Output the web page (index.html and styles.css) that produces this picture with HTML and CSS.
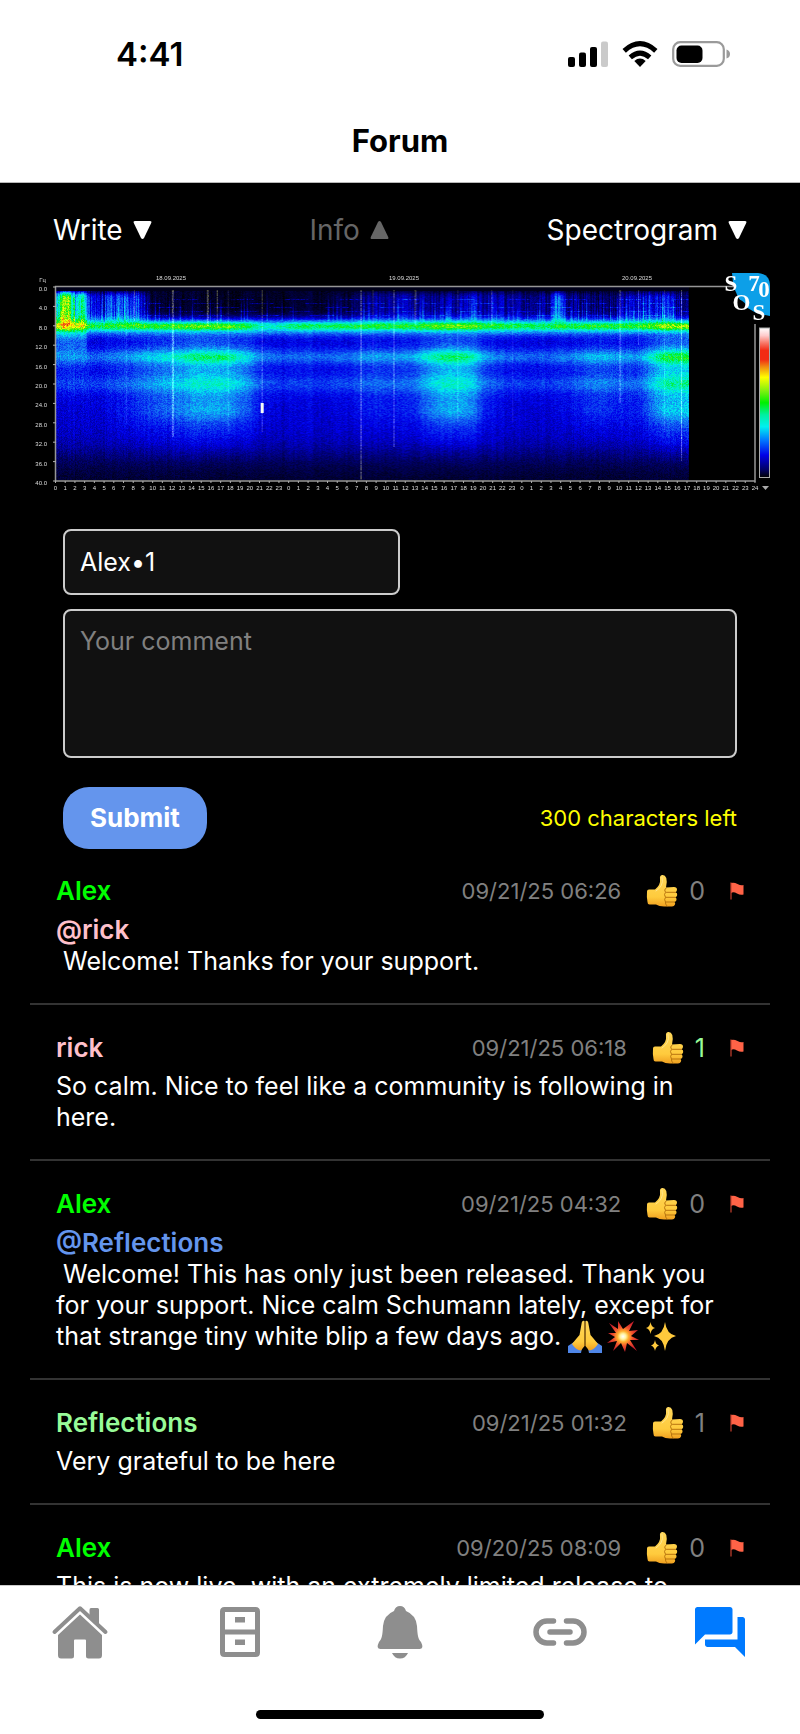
FILE: index.html
```html
<!DOCTYPE html>
<html lang="en">
<head>
<meta charset="utf-8">
<meta name="viewport" content="width=device-width, initial-scale=1">
<title>Forum</title>
<link rel="stylesheet" href="styles.css">
</head>
<body>
<svg class="symbols" aria-hidden="true">
  <defs>
    <linearGradient id="skin" x1="0" y1="0" x2="0" y2="1">
      <stop offset="0" stop-color="#ffd75a"/><stop offset="0.7" stop-color="#ffcb3d"/><stop offset="1" stop-color="#f0a020"/>
    </linearGradient>
    <radialGradient id="blast">
      <stop offset="0" stop-color="#ffffff"/><stop offset="0.18" stop-color="#fff3a0"/><stop offset="0.35" stop-color="#ffb02e"/><stop offset="0.6" stop-color="#f2542d"/><stop offset="1" stop-color="#c81e2c"/>
    </radialGradient>
  </defs>
  <symbol id="thumb" viewBox="0 0 32 34">
    <path fill="url(#skin)" d="M1 17.500Q1 15.500 3 15.500H9Q11.500 13.500 13 11Q14.500 8.500 14 5Q13.500 1.500 16 1Q19 0.500 20.300 4Q21.500 8 20 13.500L28 13Q31 13 31 15.500Q31 17.500 29.500 18.200Q31.500 19 31.200 21Q31 22.800 29.300 23.300Q31 24.200 30.500 26Q30.200 27.700 28.500 28Q29.600 29 29 30.500Q28.300 32.500 26 32.500H18Q13 32.500 10 30.500H3.500Q1.500 30.500 1.500 28Q0.500 23 1 17.500Z"/>
    <path fill="none" stroke="#b8740f" stroke-width="1" stroke-linecap="round" d="M20.500 18.300H29.500M20 23.300H29.300M20 28H28.500M20 14Q17.500 16 19.500 18.300Q17.500 20.500 19.500 23.300Q17.800 25.500 19.500 28Q19 30 21 32"/>
    <path fill="none" stroke="#ffe58a" stroke-width="1" stroke-linecap="round" d="M16 3Q17.500 8 15 12Q13 15 10 17"/>
  </symbol>
  <symbol id="flag" viewBox="0 0 14 18">
    <path fill="#ff6347" d="M1 1Q4 0 7.500 2T13.500 3V12.500Q10.500 13.500 7 11.500T1 11Z"/>
    <path fill="none" stroke="#c9422f" stroke-width="1.200" d="M1 0.500V17.500"/>
  </symbol>
</svg>

<header class="top">
  <div class="status">
    <span class="clock">4:41</span>
    <svg class="status-icons" viewBox="0 0 164 28" role="img" aria-label="Signal, Wi-Fi and battery">
      <rect x="0" y="17" width="7" height="10" rx="2"/>
      <rect x="11" y="12.500" width="7" height="14.500" rx="2"/>
      <rect x="22" y="7" width="7" height="20" rx="2"/>
      <rect x="33" y="1.500" width="7" height="25.500" rx="2" fill="#cacaca"/>
      <path d="M72 27L66.300 20.900Q72 16.200 77.700 20.900Z"/>
      <path fill="none" stroke="#000" stroke-width="5" d="M62.300 17.300Q72 8.800 81.700 17.300M56.200 10.800Q72 -3.500 87.800 10.800"/>
      <rect x="105.200" y="2.200" width="50.600" height="23.600" rx="7" fill="#fff" stroke="#9a9a9a" stroke-width="2.200"/>
      <rect x="108.500" y="5.500" width="26" height="17.500" rx="5"/>
      <path fill="#9a9a9a" d="M158.500 9.500Q162 10.500 162 14T158.500 18.500Z"/>
    </svg>
  </div>
  <h1 class="title">Forum</h1>
</header>

<main class="page">
  <div class="panels">
    <button class="panel-btn" type="button">Write <svg class="tri" viewBox="0 0 19 20"><path d="M2 1H17Q19 1 18.200 3L11 18Q9.500 20 8 18L0.800 3Q0 1 2 1Z"/></svg></button>
    <button class="panel-btn panel-off" type="button">Info <svg class="tri" viewBox="0 0 19 20"><path d="M2 19H17Q19 19 18.200 17L11 2Q9.500 0 8 2L0.800 17Q0 19 2 19Z"/></svg></button>
    <button class="panel-btn" type="button">Spectrogram <svg class="tri" viewBox="0 0 19 20"><path d="M2 1H17Q19 1 18.200 3L11 18Q9.500 20 8 18L0.800 3Q0 1 2 1Z"/></svg></button>
  </div>

  <figure class="spectro">
    <canvas class="heat" id="heat" width="634" height="193"></canvas>
    <svg class="axes" id="axes" viewBox="0 0 740 225" role="img" aria-label="Spectrogram, 18.09.2025 to 20.09.2025">
      <defs>
        <linearGradient id="scale" x1="0" y1="0" x2="0" y2="1">
          <stop offset="0" stop-color="#fff"/><stop offset="0.050" stop-color="#fcc"/><stop offset="0.100" stop-color="#f87868"/><stop offset="0.150" stop-color="#f22a14"/><stop offset="0.210" stop-color="#f22a14"/><stop offset="0.260" stop-color="#f08c10"/><stop offset="0.330" stop-color="#ff0"/><stop offset="0.420" stop-color="#80f010"/><stop offset="0.500" stop-color="#00f000"/><stop offset="0.580" stop-color="#00f0a0"/><stop offset="0.660" stop-color="#00f0f0"/><stop offset="0.750" stop-color="#0078ff"/><stop offset="0.850" stop-color="#0000e8"/><stop offset="0.950" stop-color="#000060"/><stop offset="1" stop-color="#000"/>
        </linearGradient>
      </defs>
      <path fill="none" stroke="#969696" stroke-width="1.500" d="M25.500 212V16.500H704M25 211H725V54"/>
      <g id="marks"></g>
      <rect x="729.500" y="58" width="10" height="149.500" fill="url(#scale)" stroke="#aaa" stroke-width="1"/>
      <path fill="#0c9fe8" d="M702 3H728Q740 4 740 16V46Q722 44 712 33Q703 22 702 3Z"/>
      <path fill="#000" d="M708 29Q710 36 717 39Q717 32 708 29Z"/>
      <g class="logo-text">
        <text x="701" y="21">S</text><text x="724" y="21">7</text><text x="734" y="27">0</text><text x="711.500" y="40">O</text><text x="729" y="50">S</text>
      </g>
      <path fill="#aaa" d="M732 216H739L735.500 220Z"/>
    </svg>
  </figure>

  <form class="compose" onsubmit="return false">
    <input class="field name" type="text" value="Alex•1" aria-label="Name">
    <textarea class="field comment" placeholder="Your comment" aria-label="Your comment"></textarea>
    <div class="send">
      <button class="submit" type="submit">Submit</button>
      <span class="left">300 characters left</span>
    </div>
  </form>

  <div class="posts">
    <article class="post">
      <div class="post-head"><b class="user lime">Alex</b><time class="date">09/21/25 06:26</time><button class="like" type="button" aria-label="Like"><svg class="thumb"><use href="#thumb"/></svg><span>0</span></button><button class="report" type="button" aria-label="Report"><svg class="flag"><use href="#flag"/></svg></button></div>
      <b class="mention pink">@rick</b>
      <p class="text"> Welcome! Thanks for your support.</p>
    </article>
    <article class="post">
      <div class="post-head"><b class="user pink">rick</b><time class="date">09/21/25 06:18</time><button class="like liked" type="button" aria-label="Like"><svg class="thumb"><use href="#thumb"/></svg><span>1</span></button><button class="report" type="button" aria-label="Report"><svg class="flag"><use href="#flag"/></svg></button></div>
      <p class="text">So calm. Nice to feel like a community is following in here.</p>
    </article>
    <article class="post">
      <div class="post-head"><b class="user lime">Alex</b><time class="date">09/21/25 04:32</time><button class="like" type="button" aria-label="Like"><svg class="thumb"><use href="#thumb"/></svg><span>0</span></button><button class="report" type="button" aria-label="Report"><svg class="flag"><use href="#flag"/></svg></button></div>
      <b class="mention blue">@Reflections</b>
      <p class="text"> Welcome! This has only just been released. Thank you for your support. Nice calm Schumann lately, except for that strange tiny white blip a few days ago. <svg class="emoji" viewBox="0 0 34 34" role="img" aria-label="Folded hands"><path fill="#4f86e8" d="M0 27L6 23L14 29L13 34H0ZM34 27L28 23L20 29L21 34H34Z"/><path fill="url(#skin)" d="M16.500 2Q14 1 13.500 5L11.500 16Q8 20 4 25Q8 31 13 31.500L16.500 27ZM17.500 2Q20 1 20.500 5L22.500 16Q26 20 30 25Q26 31 21 31.500L17.500 27Z"/><path fill="none" stroke="#b8740f" stroke-width="0.800" d="M17 3V27"/></svg><svg class="emoji" viewBox="0 0 34 34" role="img" aria-label="Collision"><path fill="url(#blast)" d="M3 4L12 10L12 2L17 10L28 2L23 12L32 11L25 17L33 21L24 21L31 32L21 24L19 33L15 24L7 32L11 22L1 24L9 18L2 14L10 14Z"/></svg><svg class="emoji" viewBox="0 0 34 34" role="img" aria-label="Sparkles"><path fill="#ffc93c" d="M21 3Q22.500 15 32 17Q22.500 19 21 32Q19.500 19 10 17Q19.500 15 21 3ZM6.500 3Q7.200 8 11 9Q7.200 10 6.500 15Q5.800 10 2 9Q5.800 8 6.500 3ZM11 21Q11.700 25.500 15 26.500Q11.700 27.500 11 32Q10.300 27.500 7 26.500Q10.300 25.500 11 21Z"/></svg></p>
    </article>
    <article class="post">
      <div class="post-head"><b class="user green">Reflections</b><time class="date">09/21/25 01:32</time><button class="like" type="button" aria-label="Like"><svg class="thumb"><use href="#thumb"/></svg><span>1</span></button><button class="report" type="button" aria-label="Report"><svg class="flag"><use href="#flag"/></svg></button></div>
      <p class="text">Very grateful to be here</p>
    </article>
    <article class="post">
      <div class="post-head"><b class="user lime">Alex</b><time class="date">09/20/25 08:09</time><button class="like" type="button" aria-label="Like"><svg class="thumb"><use href="#thumb"/></svg><span>0</span></button><button class="report" type="button" aria-label="Report"><svg class="flag"><use href="#flag"/></svg></button></div>
      <p class="text">This is now live, with an extremely limited release to</p>
    </article>
  </div>
</main>

<nav class="tabs">
  <div class="tab-row">
    <a class="tab" href="#home" aria-label="Home"><svg viewBox="0 0 60 60"><path fill="none" stroke="currentColor" stroke-width="4" stroke-linecap="round" stroke-linejoin="round" d="M4.500 30L30 6.300L55.500 30"/><path d="M39.500 8Q39.500 6 41 6H47.500Q49 6 49 7.500V22.500L39.500 14ZM30 12.500L52 33V53Q52 56.500 49 56.500H38.500Q36 56.500 36 54V38.500Q36 37.500 35 37.500H25Q24 37.500 24 38.500V54Q24 56.500 21.500 56.500H11Q8 56.500 8 53V33Z"/></svg></a>
    <a class="tab" href="#archive" aria-label="Archive"><svg viewBox="0 0 60 60"><path fill="none" stroke="currentColor" stroke-width="5" stroke-linejoin="round" d="M14.500 7.500H45.500Q47.500 7.500 47.500 9.500V50.500Q47.500 52.500 45.500 52.500H14.500Q12.500 52.500 12.500 50.500V9.500Q12.500 7.500 14.500 7.500ZM12.500 30H47.500"/><path d="M25 15H35V20.500H25ZM25 37.500H35V43H25Z"/></svg></a>
    <a class="tab" href="#alerts" aria-label="Alerts"><svg viewBox="0 0 60 60"><path d="M30 4Q34.500 4 36 9Q46 13 47 24C47.500 33 48 37 51 40Q54.500 47 49.500 47H10.500Q5.500 47 9 40C12 37 12.500 33 13 24Q14 13 24 9Q25.500 4 30 4ZM22 51H38Q35.500 56.500 30 56.500T22 51Z"/></svg></a>
    <a class="tab" href="#links" aria-label="Links"><svg viewBox="0 0 60 60"><path fill="none" stroke="currentColor" stroke-width="5.500" stroke-linecap="round" d="M23.500 19H17A11 11 0 0 0 17 41H23.500M36.500 19H43A11 11 0 0 1 43 41H36.500M20 30H40"/></svg></a>
    <a class="tab tab-on" href="#forum" aria-label="Forum" aria-current="page"><svg viewBox="0 0 24 24"><path d="M21 6h-2v9H6v2c0 .55.45 1 1 1h11l4 4V7c0-.55-.45-1-1-1zm-4 6V3c0-.55-.45-1-1-1H3c-.55 0-1 .45-1 1v14l4-4h10c.55 0 1-.45 1-1z"/></svg></a>
  </div>
  <div class="home-bar"></div>
</nav>
<script src="spectrogram.js"></script>
</body>
</html>
```

FILE: styles.css
```css
* { box-sizing: border-box; }

body {
  margin: 0;
  height: 100vh;
  display: flex;
  flex-direction: column;
  background: #000;
  color: #fff;
  font-family: Inter, "Liberation Sans", sans-serif;
  font-size: 25px;
  line-height: 32px;
}

button {
  padding: 0;
  border: 0;
  background: none;
  color: inherit;
  font: inherit;
}

.symbols { position: absolute; width: 0; height: 0; }

.top {
  flex: none;
  background: #fff;
  color: #000;
  border-bottom: 1px solid #b8b8b8;
}
.status {
  display: flex;
  justify-content: space-between;
  align-items: center;
  padding: 34px 68px 0 116px;
}
.clock { font-size: 33px; font-weight: 600; line-height: 40px; }
.status-icons { width: 164px; height: 28px; }
.title {
  margin: 0;
  padding: 47px 0 21px;
  text-align: center;
  font-size: 31px;
  font-weight: 700;
  line-height: 40px;
}

.page { flex: 1; min-height: 0; overflow: hidden; }

.panels {
  display: flex;
  justify-content: space-between;
  padding: 31px 53px 0;
  font-size: 28px;
}
.panel-btn { display: flex; align-items: center; gap: 10px; }
.panel-off { color: #666; }
.tri { width: 19px; height: 20px; fill: currentColor; }

.spectro { position: relative; margin: 24px 30px 0; }
.axes { display: block; position: relative; width: 100%; }
.axes text { font-family: "Liberation Sans", sans-serif; font-size: 6px; fill: #ddd; }
.axes .logo-text text {
  font-family: "Liberation Serif", serif;
  font-size: 23px;
  font-weight: 700;
  fill: #fff;
  text-anchor: middle;
}
.heat { position: absolute; left: 3.5%; top: 7.7%; width: 85.6%; height: 85.8%; }

.compose { padding: 34px 63px 0; }
.field {
  display: block;
  border: 2px solid #ccc;
  border-radius: 8px;
  background: #111;
  color: #fff;
  font: inherit;
  padding: 14px 15px;
  outline: 0;
}
.field::placeholder { color: #808080; opacity: 1; }
.name { width: 50%; height: 66px; }
.comment { width: 100%; height: 149px; margin-top: 14px; resize: none; }
.send {
  display: flex;
  justify-content: space-between;
  align-items: center;
  margin-top: 29px;
}
.submit {
  padding: 15px 27px;
  border-radius: 26px;
  background: #6495ed;
  font-size: 26px;
  font-weight: 700;
}
.left { color: #ff0; font-size: 22px; }

.posts { padding: 0 30px; }
.post { padding: 25px 26px 26px; border-bottom: 2px solid #333; }
.post:first-child { padding-top: 24px; }
.post-head { display: flex; align-items: center; height: 36px; margin-bottom: 5px; }
.user { flex: 1; }
.user, .mention { font-size: 26px; font-weight: 600; }
.mention { display: block; }
.lime { color: #0f0; }
.pink { color: #ffc0cb; }
.blue { color: #6495ed; }
.green { color: #98fb98; }
.date { color: #808080; font-size: 22px; }
.like { display: flex; align-items: center; gap: 11px; margin-left: 25px; color: #808080; }
.liked { color: #98fb98; }
.thumb { width: 32px; height: 34px; }
.report { display: flex; margin-left: 25px; }
.flag { width: 14px; height: 18px; }
.text { margin: 0; padding-right: 16px; line-height: 31px; white-space: pre-wrap; }
.emoji { width: 34px; height: 34px; margin: -8px 4px -4px 0; vertical-align: middle; }

.tabs {
  flex: none;
  background: #fff;
  color: #8e8e8e;
  border-top: 1px solid #ccc;
  padding: 16px 0 15px;
}
.tab-row { display: flex; }
.tab { flex: 1; display: flex; justify-content: center; color: inherit; }
.tab svg { width: 60px; height: 60px; fill: currentColor; }
.tab-on { color: #007aff; }
.home-bar {
  width: 36%;
  height: 9px;
  margin: 48px auto 0;
  border-radius: 5px;
  background: #000;
}
```

FILE: spectrogram.js
```js
// Axis labels: frequency down the side, hours along the bottom, dates on top.
const NS = "http://www.w3.org/2000/svg";
const marks = document.getElementById("marks");

function label(x, y, text, anchor) {
  const t = document.createElementNS(NS, "text");
  t.setAttribute("x", x);
  t.setAttribute("y", y);
  t.setAttribute("text-anchor", anchor);
  t.textContent = text;
  marks.appendChild(t);
}

function tick(d) {
  const p = document.createElementNS(NS, "path");
  p.setAttribute("d", d);
  p.setAttribute("stroke", "#b0b0b0");
  marks.appendChild(p);
}

label(16, 12, "Гц", "end");
for (let i = 0; i <= 10; i++) {
  const y = 17 + i * 19.4;
  label(17, y + 4, (i * 4).toFixed(1), "end");
  tick(`M23 ${y}h3`);
}
for (let h = 0; h <= 72; h++) {
  const x = 25.500 + h * 9.715;
  label(x, 220, h === 72 ? 24 : h % 24, "middle");
  tick(`M${x} 211v2`);
}
["18.09.2025", "19.09.2025", "20.09.2025"].forEach((d, i) => label(141 + i * 233, 10, d, "middle"));

// Signal strength over 65 hours and 40 Hz, drawn through the colour scale.
const scale = [
  [0, 0, 0, 0], [0.05, 0, 0, 80], [0.15, 0, 0, 235], [0.25, 20, 120, 245], [0.35, 0, 235, 240],
  [0.43, 0, 240, 150], [0.5, 0, 240, 20], [0.58, 128, 240, 16], [0.67, 255, 255, 0],
  [0.74, 240, 140, 16], [0.82, 242, 42, 20], [0.92, 250, 170, 160], [1, 255, 255, 255]
];

function colour(v) {
  v = Math.max(0, Math.min(1, v));
  let i = 1;
  while (i < scale.length - 1 && scale[i][0] < v) i++;
  const a = scale[i - 1], b = scale[i], k = (v - a[0]) / (b[0] - a[0]);
  return [1, 2, 3].map(c => a[c] + (b[c] - a[c]) * k);
}

let seed = 7;
function rnd() {
  seed = (seed * 1664525 + 1013904223) >>> 0;
  return seed / 4294967296;
}
const bell = (x, c, w) => Math.exp(-(((x - c) / w) ** 2));
const step = (x, c, w) => 1 / (1 + Math.exp(-(x - c) / w));

const canvas = document.getElementById("heat");
const ctx = canvas.getContext("2d");
const W = canvas.width, H = canvas.height;
const img = ctx.createImageData(W, H);

// Thin vertical interference lines: hour, strength, depth in Hz.
const spikes = [[12, 0.16, 31], [7.2, 0.05, 28], [8, 0.15, 7], [15.6, 0.18, 8], [16.6, 0.18, 8], [17.7, 0.06, 30],
  [21.2, 0.14, 30], [31.4, 0.22, 40], [34.8, 0.18, 33], [37, 0.12, 8], [44.9, 0.14, 8], [41.4, 0.07, 28],
  [47, 0.05, 28], [58.1, 0.1, 24], [60, 0.1, 12], [64.4, 0.2, 36], [32.6, 0.08, 18], [62.7, 0.06, 30]];

let drift = 0;
for (let x = 0; x < W; x++) {
  const t = x / 9.715;
  const column = rnd() - 0.5;
  const burst = rnd();
  drift = drift * 0.9 + (rnd() - 0.5) * 0.5;
  const day = 0.4 * bell(t, 11, 4) + 0.95 * step(t, 13.5, 1.2) * (1 - step(t, 19.6, 0.9))
    + 1.05 * step(t, 38, 1) * (1 - step(t, 43.4, 0.8)) + 1.1 * step(t, 61.2, 0.7)
    + 0.35 * bell(t, 56, 3) + 0.2 * bell(t, 33, 3);
  const low = 0.22 * step(9 - t, 0, 0.3) + 0.1 * bell(t, 34, 4) + 0.12 * bell(t, 42, 5)
    + 0.2 * bell(t, 51.6, 0.6) + 0.1 * bell(t, 53, 7) + 0.17 * bell(t, 62, 3);
  for (let y = 0; y < H; y++) {
    const f = y / H * 40;
    let v = 0.025 + 0.13 * step(f, 7, 0.5) * (1 - step(f, 34.5, 2));
    v -= 0.015 * bell(f, 11, 1.3) * (1 - Math.min(day, 1)) + 0.02 * step(f, 23, 1) * (1 - step(f, 34, 2));
    v += low * step(f, 1.2, 0.35) * (1 - step(f, 7.2, 0.5)) * (0.75 + column * 0.6 + drift * 0.3);
    v += (0.15 + 0.08 * day - 0.09 * bell(t, 22, 2)) * bell(f, 8, 0.9) + 0.18 * bell(f, 8, 1.7);
    v += (0.08 + 0.1 * day) * bell(f, 14.4, 1.4);
    v += (0.045 + 0.05 * day) * bell(f, 20, 1.6);
    v += 0.05 * day * bell(f, 25.7, 1.8);
    v += 0.125 * day * step(f, 12.5, 1.1) * (1 - step(f, 27.5, 2)) + 0.035 * day * step(f, 8, 1) * (1 - step(f, 34, 1.2));
    v += 0.13 * step(3.1 - t, 0, 0.05) * step(f, 1, 0.3) * (1 - step(f, 13, 2.4));
    v += (0.3 * bell(t, 0.9, 0.65) + 0.14 * bell(t, 2.5, 0.4)) * step(f, 1, 0.3) * (1 - step(f, 8, 0.8));
    if (burst > 0.88 && f > 1 && f < 7) v += 0.09 * bell(f, 6, 3);
    if (f > 2 && f < 6.5 && y % 4 < 1 && t > 9 && Math.sin(t * 1.1 + y) > 0.2) v += 0.09 * rnd();
    v += (rnd() - 0.5) * (0.02 + v * 0.22) + (column * 0.02 + drift * 0.012) * (f < 36 ? 1 : 0.4);
    if (f < 0.7) v = 0.015;
    const c = colour(v);
    for (const s of spikes) {
      if (Math.abs(t - s[0]) < 0.06 && f > 0.5 && f < s[2]) {
        const add = s[1] * 600 * (0.3 + rnd() * 0.8);
        c[0] += add; c[1] += add; c[2] += add * 0.5;
      }
    }
    if (Math.abs(t - 21.2) < 0.13 && f > 24 && f < 26) { c[0] = 245; c[1] = 250; c[2] = 245; }
    const o = (y * W + x) * 4;
    img.data[o] = c[0];
    img.data[o + 1] = c[1];
    img.data[o + 2] = c[2];
    img.data[o + 3] = 255;
  }
}
ctx.putImageData(img, 0, 0);
```
